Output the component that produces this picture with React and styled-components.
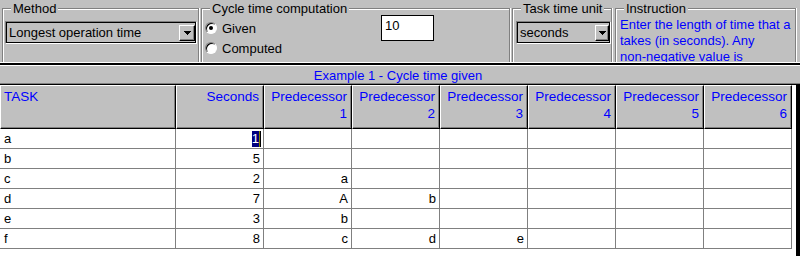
import React from 'react';
import styled, { createGlobalStyle } from 'styled-components';

const tasks = [
  { name: 'a', seconds: 1, preds: [] },
  { name: 'b', seconds: 5, preds: [] },
  { name: 'c', seconds: 2, preds: ['a'] },
  { name: 'd', seconds: 7, preds: ['A', 'b'] },
  { name: 'e', seconds: 3, preds: ['b'] },
  { name: 'f', seconds: 8, preds: ['c', 'd', 'e'] },
]

const PRED_COLS = [1, 2, 3, 4, 5, 6]

// little windows style drop down arrow
function DropArrow() {
  return (
    <svg width="7" height="4" viewBox="0 0 7 4" shapeRendering="crispEdges">
      <path d="M0 0h7v1h-1v1h-1v1h-1v1h-1v-1h-1v-1h-1v-1h-1z" fill="#000" />
    </svg>
  )
}

function Combo({ value, width, offset, buttonWidth }) {
  return (
    <ComboBox $width={width} $offset={offset}>
      <span>{value}</span>
      <ArrowButton $width={buttonWidth}><DropArrow /></ArrowButton>
    </ComboBox>
  )
}

function App() {
  return (
    <Window>
      <GlobalStyle />
      <TopPanel>
        <Group $width={197} $gap={0}>
          <Legend>Method</Legend>
          <Combo value="Longest operation time" width={192} offset={2} buttonWidth={16} />
        </Group>

        <Group $width={309} $gap={2}>
          <Legend>Cycle time computation</Legend>
          <CycleBody>
            <RadioList>
              <RadioRow><RadioDot $checked />Given</RadioRow>
              <RadioRow><RadioDot />Computed</RadioRow>
            </RadioList>
            <TextInput>10</TextInput>
          </CycleBody>
        </Group>

        <Group $width={100} $gap={2}>
          <Legend>Task time unit</Legend>
          <Combo value="seconds" width={95} offset={3} buttonWidth={14} />
        </Group>

        <Group $width={181} $gap={3}>
          <Legend>Instruction</Legend>
          <Instruction>
            Enter the length of time that a takes (in seconds). Any <NoWrap>non-negative</NoWrap> value is acceptable.
          </Instruction>
        </Group>
      </TopPanel>

      <Grid>
        <Caption>Example 1 - Cycle time given</Caption>
        <GridArea>
          <Sheet>
            <Row>
              <HeadCell $left>TASK</HeadCell>
              <HeadCell>Seconds</HeadCell>
              {PRED_COLS.map(n => (
                <HeadCell key={n}>Predecessor {n}</HeadCell>
              ))}
            </Row>
            {tasks.map((task, i) => (
              <Row key={task.name}>
                <Cell $left>{task.name}</Cell>
                {i === 0 ? (
                  <EditCell>
                    <Selected>{task.seconds}</Selected>
                    <Caret />
                  </EditCell>
                ) : (
                  <Cell>{task.seconds}</Cell>
                )}
                {PRED_COLS.map((n, j) => (
                  <Cell key={n}>{task.preds[j] || ''}</Cell>
                ))}
              </Row>
            ))}
          </Sheet>
          <EdgeBar />
        </GridArea>
      </Grid>
    </Window>
  );
}

const GlobalStyle = createGlobalStyle`
  * { box-sizing: border-box; }
  body {
    margin: 0;
    background: #fff;
    font-family: "Liberation Sans", Arial, sans-serif;
    font-size: 13px;
    color: #000;
  }
`

const Window = styled.div`
  display: flex;
  flex-direction: column;
  width: 800px;
  height: 256px;
  overflow: hidden;
`

const TopPanel = styled.div`
  display: flex;
  align-items: flex-start;
  flex: 0 0 63px;
  padding-left: 2px;
  background: #c0c0c0;
  border-bottom: 1px solid #fff;
`

const Group = styled.div`
  position: relative;
  flex: 0 0 ${p => p.$width}px;
  height: 54px;
  margin: 8px 0 0 ${p => p.$gap}px;
  border: 1px solid #808080;
  border-bottom: none;
  box-shadow: inset 1px 1px 0 #fff, 1px 0 0 #fff;
`

const Legend = styled.span`
  position: absolute;
  top: -8px;
  left: 8px;
  padding: 0 2px;
  line-height: 15px;
  background: #c0c0c0;
  white-space: nowrap;
`

const ComboBox = styled.div`
  display: flex;
  align-items: center;
  justify-content: space-between;
  width: ${p => p.$width}px;
  height: 23px;
  margin: 12px 0 0 ${p => p.$offset}px;
  padding: 0 1px 0 3px;
  background: #c0c0c0;
  border: 1px solid;
  border-color: #808080 #fff #fff #808080;
  box-shadow: inset 0 0 0 1px #000;
  white-space: nowrap;
`

const ArrowButton = styled.span`
  display: flex;
  align-items: center;
  justify-content: center;
  width: ${p => p.$width}px;
  height: 16px;
  background: #c0c0c0;
  border: 1px solid;
  border-color: #fff #000 #000 #fff;
  box-shadow: inset -1px -1px 0 #808080;
`

const CycleBody = styled.div`
  display: flex;
  padding-left: 3px;
`

const RadioList = styled.div`
  flex: 0 0 176px;
  padding-top: 9px;
`

const RadioRow = styled.div`
  display: flex;
  align-items: center;
  gap: 5px;
  height: 20px;
`

const RadioDot = styled.span`
  display: flex;
  align-items: center;
  justify-content: center;
  width: 12px;
  height: 12px;
  border-radius: 50%;
  background: #fff;
  border: 1px solid;
  border-color: #808080 #fff #fff #808080;
  box-shadow: inset 1px 1px 0 #000;

  &::after {
    content: '';
    width: 4px;
    height: 4px;
    border-radius: 50%;
    background: ${p => (p.$checked ? '#000' : 'transparent')};
  }
`

const TextInput = styled.div`
  width: 53px;
  height: 26px;
  margin-top: 6px;
  padding: 2px 3px;
  line-height: 15px;
  background: #fff;
  border: 1px solid #000;
`

const Instruction = styled.div`
  height: 45px;
  margin-top: 8px;
  padding: 0 2px 0 4px;
  line-height: 16px;
  color: #0000ff;
  overflow: hidden;
`

const NoWrap = styled.span`
  white-space: nowrap;
`

const Grid = styled.div`
  display: flex;
  flex-direction: column;
  flex: 1;
  background: #c0c0c0;
  border-top: 2px solid #000;
`

const Caption = styled.div`
  height: 20px;
  padding: 3px 4px 0 0;
  line-height: 14px;
  text-align: center;
  color: #0000ff;
  border-top: 1px solid #fff;
  border-bottom: 1px solid #000;
  box-shadow: inset 0 -1px 0 #808080;
`

const GridArea = styled.div`
  display: flex;
  flex: 1;
`

const Sheet = styled.div`
  flex: 1;
  background: #fff;
`

const EdgeBar = styled.div`
  flex: 0 0 4px;
  background: #000;
`

const Row = styled.div`
  display: grid;
  grid-template-columns: 176px repeat(7, 88px);
`

const HeadCell = styled.div`
  height: 44px;
  padding: 3px 4px 0 3px;
  font-size: 13.5px;
  line-height: 16.5px;
  text-align: ${p => (p.$left ? 'left' : 'right')};
  color: #0000ff;
  background: #c0c0c0;
  border: 1px solid;
  border-color: #fff #000 #000 #fff;
  box-shadow: inset -1px -1px 0 #808080;
`

const Cell = styled.div`
  height: 20px;
  padding: 0 3px 0 4px;
  line-height: 19px;
  text-align: ${p => (p.$left ? 'left' : 'right')};
  white-space: nowrap;
  overflow: hidden;
  border-right: 1px solid #808080;
  border-bottom: 1px solid #808080;
`

const EditCell = styled.div`
  display: flex;
  align-items: center;
  justify-content: flex-end;
  height: 20px;
  padding-right: 2px;
  border-right: 1px solid #808080;
  border-bottom: 1px solid #808080;
`

const Selected = styled.span`
  line-height: 16px;
  color: #fff;
  background: #000080;
`

const Caret = styled.span`
  width: 2px;
  height: 16px;
  background: #000;
  border-left: 1px solid #808000;
`

export default App;
